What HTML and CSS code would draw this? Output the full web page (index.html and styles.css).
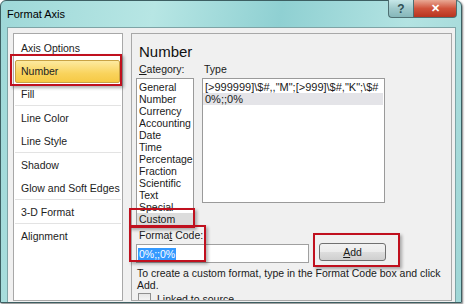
FILE: index.html
```html
<!DOCTYPE html>
<html lang="en">
<head>
    <meta charset="UTF-8">
    <title>Format Axis</title>
    <link rel="stylesheet" href="styles.css">
</head>
<body>
<div class="window">
    <div class="title-bar">
        <span class="title-text">Format Axis</span>
        <div class="title-buttons">
            <div class="help-btn">?</div>
            <div class="close-btn">&#x2715;</div>
        </div>
    </div>

    <div class="client">
        <!-- Left navigation -->
        <ul class="nav-list">
            <li class="nav-item">Axis Options</li>
            <li class="nav-item nav-selected">Number</li>
            <li class="nav-item nav-sep">Fill</li>
            <li class="nav-item">Line Color</li>
            <li class="nav-item nav-sep">Line Style</li>
            <li class="nav-item">Shadow</li>
            <li class="nav-item nav-sep">Glow and Soft Edges</li>
            <li class="nav-item nav-sep">3-D Format</li>
            <li class="nav-item">Alignment</li>
        </ul>

        <!-- Number page -->
        <div class="page">
            <h2 class="page-title">Number</h2>
            <div class="lists-row">
                <div class="category-col">
                    <div class="field-label"><u>C</u>ategory:</div>
                    <ul class="category-list">
                        <li>General</li>
                        <li>Number</li>
                        <li>Currency</li>
                        <li>Accounting</li>
                        <li>Date</li>
                        <li>Time</li>
                        <li>Percentage</li>
                        <li>Fraction</li>
                        <li>Scientific</li>
                        <li>Text</li>
                        <li>Special</li>
                        <li class="list-selected">Custom</li>
                    </ul>
                </div>
                <div class="type-col">
                    <div class="field-label">Type</div>
                    <ul class="type-list">
                        <li>[&gt;999999]\$#,,"M";[&gt;999]\$#,"K";\$#</li>
                        <li class="type-selected">0%;;0%</li>
                    </ul>
                </div>
            </div>

            <div class="field-label code-label">Forma<u>t</u> Code:</div>
            <div class="code-row">
                <div class="code-input"><span class="code-sel">0%;;0%</span></div>
                <div class="add-btn"><u>A</u>dd</div>
            </div>
            <p class="hint">To create a custom format, type in the Format Code box and click Add.</p>
            <div class="check-row">
                <span class="check-box"></span>
                <span>Linked to source</span>
            </div>
        </div>
    </div>

    <!-- red call-out boxes -->
    <div class="callout callout-number"></div>
    <div class="callout callout-custom"></div>
    <div class="callout callout-code"></div>
    <div class="callout callout-add"></div>
</div>
</body>
</html>
```

FILE: styles.css
```css
body {
    margin: 0;
    width: 465px;
    height: 304px;
    overflow: hidden;
    background: #ffffff;
    font-family: "Liberation Sans", Arial, sans-serif;
    font-size: 10px;
    color: #1a1a1a;
}

.window {
    position: relative;
    box-sizing: border-box;
    width: 462px;
    height: 303px;
    display: flex;
    flex-direction: column;
    border: 1px solid #3d5f62;
    border-radius: 6px 6px 0 0;
    background: linear-gradient(100deg, #9ed8d8 0%, #b7e6e4 30%, #8fd0d2 55%, #b3e3e2 80%, #9fd6d6 100%);
    box-shadow: 1px 1px 2px rgba(0, 0, 0, 0.5);
}

/* Title bar */
.title-bar {
    flex: none;
    height: 26px;
    display: flex;
    justify-content: space-between;
    align-items: flex-start;
    padding-left: 6px;
}

.title-text {
    margin-top: 7px;
    font-size: 11px;
    color: #000;
}

.title-buttons {
    display: flex;
    margin-right: 4px;
    margin-top: -1px;
}

.help-btn,
.close-btn {
    height: 18px;
    display: flex;
    align-items: center;
    justify-content: center;
    font-weight: bold;
    border: 1px solid #4e6f72;
    border-top: none;
    box-sizing: border-box;
}

.help-btn {
    width: 25px;
    border-radius: 0 0 0 4px;
    border-right: none;
    color: #2f4f55;
    font-size: 12px;
    background: linear-gradient(#c7e7e8, #9fc9cb 50%, #86b7ba);
}

.close-btn {
    width: 44px;
    border-radius: 0 0 4px 0;
    color: #ffffff;
    font-size: 11px;
    background: linear-gradient(#e9a995, #d0533b 50%, #b8341f);
}

/* Client area */
.client {
    flex: 1;
    min-height: 0;
    overflow: hidden;
    display: flex;
    gap: 8px;
    margin: 0 5px 0 6px;
    padding: 5px 3px 1px 5px;
    background: #f0f0f0;
    border: 1px solid #7ea4a6;
    border-bottom: none;
}

.nav-list {
    list-style: none;
    margin: 0;
    padding: 3px 1px 0 1px;
    width: 106px;
    background: #ffffff;
    border: 1px solid #a8a8a8;
}

.nav-item {
    height: 23px;
    line-height: 23px;
    padding-left: 6px;
    font-size: 10.5px;
    color: #222;
    white-space: nowrap;
}

.nav-item.nav-sep {
    border-bottom: 1px solid #e3e3e3;
    height: 22px;
    margin-bottom: 1px;
}

.nav-selected {
    margin: 0 1px 0 0;
    background: linear-gradient(#fdeaa0, #f9d35c 60%, #f6c945);
    border: 1px solid #c9a344;
    border-radius: 2px;
    height: 21px;
    line-height: 21px;
    padding-left: 5px;
}

/* Right page */
.page {
    flex: 1;
    background: #f0f0f0;
    border: 1px solid #a8a8a8;
    padding: 9px 4px 0 4px;
    overflow: hidden;
}

.page-title {
    margin: 0 0 0 3px;
    font-size: 15px;
    font-weight: normal;
    line-height: 17px;
    color: #111;
}

.lists-row {
    display: flex;
    gap: 8px;
    margin-top: 3px;
}

.field-label {
    font-size: 10.5px;
    line-height: 13px;
    margin-left: 3px;
}

.category-list,
.type-list {
    list-style: none;
    margin: 2px 0 0 0;
    background: #ffffff;
    border: 1px solid #9a9a9a;
    font-size: 10.5px;
    line-height: 12px;
}

.category-list {
    width: 58px;
    height: 148px;
    padding: 2px 0 0 0;
    box-sizing: border-box;
    white-space: nowrap;
    overflow: hidden;
}

.category-list li {
    padding-left: 2px;
}

.list-selected {
    background: #dcdcdc;
}

.type-col .field-label {
    margin-left: 2px;
}

.type-list {
    width: 183px;
    height: 125px;
    box-sizing: border-box;
    padding: 2px 1px 0 0;
    white-space: nowrap;
    overflow: hidden;
}

.type-list li {
    padding-left: 2px;
    font-size: 11px;
}

.type-selected {
    background: #e4e4e8;
}

.code-label {
    margin-top: 3px;
}

.code-row {
    display: flex;
    align-items: flex-start;
    margin-top: 2px;
}

.code-input {
    width: 173px;
    height: 19px;
    background: #ffffff;
    border: 1px solid #a0a0a0;
    padding: 3px 0 0 1px;
    box-sizing: border-box;
    line-height: 12px;
    font-size: 10.5px;
}

.code-sel {
    background: #3399ff;
    color: #ffffff;
    padding: 0 1px;
}

.add-btn {
    width: 67px;
    height: 18px;
    margin-left: 10px;
    margin-top: -1px;
    box-sizing: border-box;
    border: 1px solid #707070;
    border-radius: 3px;
    background: linear-gradient(#f2f2f2, #ebebeb 50%, #dddddd 51%, #cfcfcf);
    display: flex;
    align-items: center;
    justify-content: center;
    font-size: 10.5px;
}

.hint {
    margin: 4px 0 0 1px;
    line-height: 12px;
    font-size: 10.5px;
}

.check-row {
    display: flex;
    gap: 6px;
    margin: 2px 0 0 2px;
    line-height: 13px;
    font-size: 10.5px;
}

.check-box {
    width: 11px;
    height: 11px;
    border: 1px solid #8f8f8f;
    background: linear-gradient(#e6e6e6, #ffffff);
}

/* Red annotation boxes */
.callout {
    position: absolute;
    border: 2px solid #c0101e;
    box-shadow: 2px 2px 3px rgba(0, 0, 0, 0.3);
}

.callout-number {
    left: 9px;
    top: 53px;
    width: 108px;
    height: 28px;
}

.callout-custom {
    left: 128px;
    top: 207px;
    width: 62px;
    height: 16px;
}

.callout-code {
    left: 128px;
    top: 224px;
    width: 73px;
    height: 33px;
}

.callout-add {
    left: 312px;
    top: 232px;
    width: 83px;
    height: 30px;
}
```
